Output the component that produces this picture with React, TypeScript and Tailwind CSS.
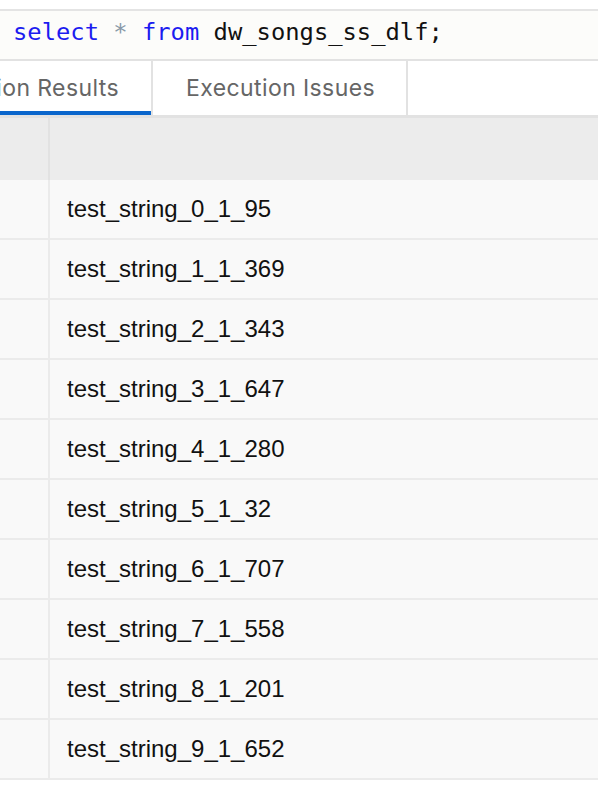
const ROWS = [
  "test_string_0_1_95",
  "test_string_1_1_369",
  "test_string_2_1_343",
  "test_string_3_1_647",
  "test_string_4_1_280",
  "test_string_5_1_32",
  "test_string_6_1_707",
  "test_string_7_1_558",
  "test_string_8_1_201",
  "test_string_9_1_652",
];

function Tab({ label, active, width }: { label: string; active?: boolean; width: string }) {
  return (
    <div
      className={`relative flex h-full shrink-0 items-center justify-end overflow-hidden whitespace-nowrap border-r-2 border-[#e2e2e2] ${width}`}
    >
      <span className="font-['Inter',sans-serif] text-[23px] tracking-[0.4px] text-[#666666]">{label}</span>
      {active && <div className="absolute bottom-0 left-0 right-0 h-[4px] bg-[#0a66cc]" />}
    </div>
  );
}

export default function App() {
  return (
    <div className="h-[790px] w-[598px] overflow-hidden bg-white">
      <div className="h-[11px] border-b-2 border-[#e4e4e4] bg-white" />
      <div className="flex h-[50px] items-center border-b-2 border-[#e2e2e2] bg-[#fcfcfa] pb-[5px] pl-[13px] font-['DejaVu_Sans_Mono',monospace] text-[23.8px] whitespace-nowrap">
        <span className="text-[#1c1cf0]">select</span>
        <span className="text-[#8899a8]">&nbsp;*&nbsp;</span>
        <span className="text-[#1c1cf0]">from</span>
        <span className="text-[#111]">&nbsp;dw_songs_ss_dlf;</span>
      </div>
      <div className="flex h-[54px] bg-white">
        <Tab label="Execution Results" active width="w-[153px] pr-[32px]" />
        <Tab label="Execution Issues" width="w-[255px] pl-[32px] pr-[31px]" />
      </div>
      <div className="h-[3px] bg-[#e2e2e2]" />
      <div className="flex h-[62px] bg-[#ececec]">
        <div className="w-[50px] border-r-2 border-[#e2e2e2]" />
        <div className="flex-1" />
      </div>
      {ROWS.map((r) => (
        <div key={r} className="flex h-[60px] border-b-2 border-[#ebebeb] bg-[#f9f9f9]">
          <div className="w-[50px] border-r-2 border-[#ebebeb]" />
          <div className="flex flex-1 items-center pl-[17px] pb-[1px] font-['Liberation_Sans',Arial,sans-serif] text-[24px] text-[#111]">
            {r}
          </div>
        </div>
      ))}
    </div>
  );
}
